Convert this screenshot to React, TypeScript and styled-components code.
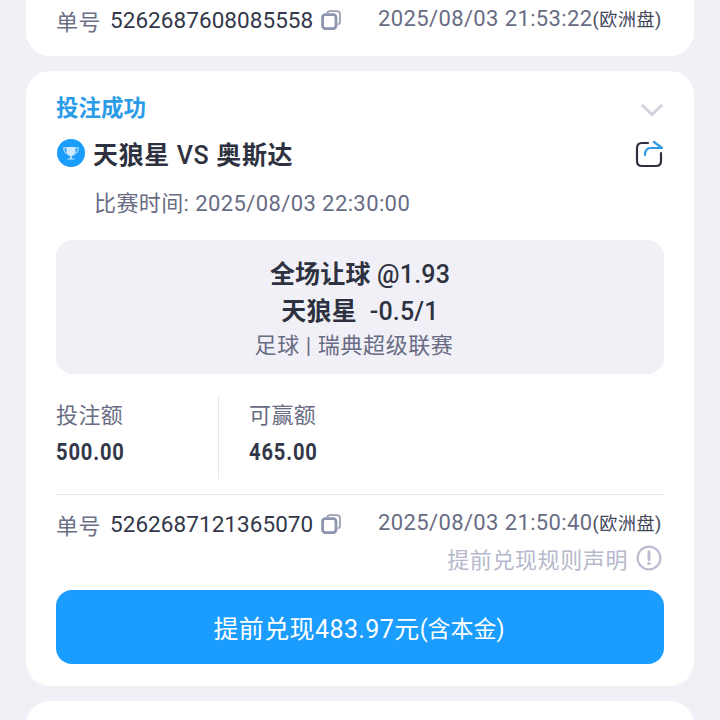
import React, { FunctionComponent } from 'react';
import styled, { createGlobalStyle } from 'styled-components';

const GlobalStyle = createGlobalStyle`
    html, body {
        margin: 0;
        padding: 0;
        background: #f0f0f6;
        font-family: Roboto, "Noto Sans CJK SC", sans-serif;
    }
`;

const CopyIcon: FunctionComponent = () => (
    <svg width="20" height="20" viewBox="0 0 20 20" fill="none">
        <path d="M6 3.6 Q6.6 1.2 9 1.2 H16 Q19 1.2 19 4.2 V12 Q19 14 17 14.6" stroke="#9a9fb8" strokeWidth="1.8" />
        <rect x="1.6" y="4.6" width="13.4" height="14" rx="2.8" stroke="#8e93ae" strokeWidth="2.8" />
    </svg>
);

const ChevronIcon: FunctionComponent = () => (
    <svg width="24" height="16" viewBox="0 0 24 16" fill="none">
        <path d="M2 3 L12 12.5 L22 3" stroke="#d0d1dc" strokeWidth="3" />
    </svg>
);

const ShareIcon: FunctionComponent = () => (
    <svg width="28" height="28" viewBox="0 0 28 28" fill="none">
        <path d="M13 3 H7 Q2 3 2 8 V21 Q2 26 7 26 H21 Q26 26 26 21 V13" stroke="#2e3240" strokeWidth="2.2" strokeLinecap="round" />
        <path d="M10 15 Q10 8 16 8 H27 L19 2" stroke="#2a9be8" strokeWidth="2.2" strokeLinecap="round" strokeLinejoin="round" />
    </svg>
);

const TrophyIcon: FunctionComponent = () => (
    <svg width="28" height="28" viewBox="0 0 28 28">
        <circle cx="14" cy="14" r="14" fill="#1a9dfb" />
        <path d="M9.5 8 H18.5 V12.5 Q18.5 17 14 17 Q9.5 17 9.5 12.5 Z" fill="#cfe9fe" />
        <path d="M9.5 9 H6.8 Q6.8 14 10.5 14.5 M18.5 9 H21.2 Q21.2 14 17.5 14.5" fill="none" stroke="#a9d9fd" strokeWidth="1.3" />
        <path d="M13.2 17 H14.8 V19.4 H17.5 V20.6 H10.5 V19.4 H13.2 Z" fill="#cfe9fe" />
    </svg>
);

const AlertIcon: FunctionComponent = () => (
    <svg width="26" height="26" viewBox="0 0 26 26" fill="none">
        <circle cx="13" cy="13" r="11.4" stroke="#babdd0" strokeWidth="2.2" />
        <path d="M13 6.8 V14.4" stroke="#babdd0" strokeWidth="3" strokeLinecap="round" />
        <circle cx="13" cy="18.6" r="1.7" fill="#babdd0" />
    </svg>
);

interface OrderProps {
    number: string;
    time: string;
}

const OrderLine: FunctionComponent<OrderProps> = ({ number, time }) => (
    <OrderRow>
        <OrderLabel>单号</OrderLabel>
        <OrderNumber>{number}</OrderNumber>
        <CopyIcon />
        <OrderTime>
            {time}
            <OddsType>(欧洲盘)</OddsType>
        </OrderTime>
    </OrderRow>
);

export default function App() {
    return (
        <Page>
            <GlobalStyle />
            <TopCard>
                <OrderLine number="5262687608085558" time="2025/08/03 21:53:22" />
            </TopCard>
            <Card>
                <StatusRow>
                    <Status>投注成功</Status>
                    <ChevronSlot>
                        <ChevronIcon />
                    </ChevronSlot>
                </StatusRow>
                <MatchRow>
                    <TrophyIcon />
                    <MatchName>
                        天狼星 <Latin>VS</Latin> 奥斯达
                    </MatchName>
                    <ShareSlot>
                        <ShareIcon />
                    </ShareSlot>
                </MatchRow>
                <MatchTime>比赛时间: 2025/08/03 22:30:00</MatchTime>
                <BetPanel>
                    <BetTitle>
                        全场让球 <Latin>@1.93</Latin>
                    </BetTitle>
                    <BetTitle>
                        天狼星&nbsp;&nbsp;<Latin>-0.5/1</Latin>
                    </BetTitle>
                    <BetLeague>足球 | 瑞典超级联赛</BetLeague>
                </BetPanel>
                <Amounts>
                    <Amount>
                        <AmountLabel>投注额</AmountLabel>
                        <AmountValue>500.00</AmountValue>
                    </Amount>
                    <Amount $divided>
                        <AmountLabel>可赢额</AmountLabel>
                        <AmountValue>465.00</AmountValue>
                    </Amount>
                </Amounts>
                <Divider />
                <OrderLine number="5262687121365070" time="2025/08/03 21:50:40" />
                <RuleRow>
                    提前兑现规则声明
                    <AlertIcon />
                </RuleRow>
                <CashOut>
                    提前兑现483.97元<CashOutNote>(含本金)</CashOutNote>
                </CashOut>
            </Card>
            <BottomCard />
        </Page>
    );
}

const Page = styled.div`
    width: 720px;
    height: 720px;
    box-sizing: border-box;
    padding: 0 26px;
    display: flex;
    flex-direction: column;
    gap: 15px;
    overflow: hidden;
    background: #f0f0f6;
`;

const Card = styled.div`
    flex: none;
    background: #fff;
    border-radius: 24px;
    padding: 21px 30px 22px;
    height: 615px;
    box-sizing: border-box;
    display: flex;
    flex-direction: column;
`;

const TopCard = styled.div`
    flex: none;
    height: 56px;
    box-sizing: border-box;
    background: #fff;
    border-radius: 0 0 24px 24px;
    padding: 5px 30px 0;
`;

const BottomCard = styled.div`
    flex: none;
    height: 60px;
    background: #fff;
    border-radius: 24px 24px 0 0;
`;

const OrderRow = styled.div`
    display: flex;
    align-items: center;
    height: 30px;
`;

const OrderLabel = styled.span`
    font-size: 22px;
    letter-spacing: 0.4px;
    color: #6b6f86;
    width: 54px;
`;

const OrderNumber = styled.span`
    font-size: 22.5px;
    letter-spacing: 0.06px;
    color: #33374a;
    margin-right: 8px;
`;

const OrderTime = styled.span`
    margin-left: auto;
    margin-right: 2px;
    font-size: 22px;
    letter-spacing: 0.38px;
    color: #686c84;
    position: relative;
    top: -2px;
`;

const OddsType = styled.span`
    font-size: 18px;
    letter-spacing: 0.6px;
    color: #43475a;
`;

const StatusRow = styled.div`
    display: flex;
    align-items: center;
    justify-content: space-between;
    height: 28px;
`;

const Status = styled.span`
    font-size: 22.5px;
    font-weight: 700;
    color: #2a9be8;
`;

const ChevronSlot = styled.span`
    display: flex;
    margin-top: 8px;
`;

const MatchRow = styled.div`
    display: flex;
    align-items: center;
    height: 34px;
    margin-top: 16px;
    padding-left: 1px;
`;

const MatchName = styled.span`
    flex: 1;
    font-size: 25px;
    font-weight: 700;
    letter-spacing: 0.65px;
    color: #2e3240;
    margin-left: 8px;
`;

const Latin = styled.span`
    font-weight: 500;
`;

const ShareSlot = styled.span`
    display: flex;
    margin: 2px 1px 0 0;
`;

const MatchTime = styled.div`
    font-size: 22px;
    letter-spacing: 0.4px;
    color: #686c84;
    margin: 19px 0 0 38px;
    height: 30px;
    line-height: 30px;
`;

const BetPanel = styled.div`
    margin-top: 21px;
    height: 134px;
    box-sizing: border-box;
    padding-top: 16px;
    background: #f0f0f6;
    border-radius: 16px;
    display: flex;
    flex-direction: column;
    align-items: center;
`;

const BetTitle = styled.div`
    font-size: 25px;
    font-weight: 700;
    letter-spacing: 0.2px;
    line-height: 37px;
    color: #2e3240;
`;

const BetLeague = styled.div`
    font-size: 22px;
    letter-spacing: 0.6px;
    line-height: 27px;
    margin-top: 2px;
    padding-right: 12px;
    color: #686c84;
`;

const Amounts = styled.div`
    display: flex;
    margin-top: 22px;
    height: 83px;
`;

const Amount = styled.div<{ $divided?: boolean }>`
    display: flex;
    flex-direction: column;
    gap: 6px;
    padding-top: 5px;
    width: ${({ $divided }) => ($divided ? 'auto' : '162px')};
    padding-left: ${({ $divided }) => ($divided ? '30px' : '0')};
    border-left: ${({ $divided }) => ($divided ? '1px solid #e6e6ec' : 'none')};
`;

const AmountLabel = styled.span`
    font-size: 22px;
    letter-spacing: 0.4px;
    line-height: 30px;
    color: #686c84;
`;

/* the numerals in the reference are a narrow DIN-like face, closest is a squeezed Roboto */
const AmountValue = styled.span`
    font-size: 24px;
    font-weight: 700;
    letter-spacing: 1px;
    line-height: 30px;
    color: #33374a;
    transform: scaleX(0.84);
    transform-origin: left center;
`;

const Divider = styled.div`
    height: 1px;
    background: #e4e4ea;
    margin: 15px 0 14px;
`;

const RuleRow = styled.div`
    display: flex;
    align-items: center;
    justify-content: flex-end;
    gap: 8px;
    height: 30px;
    margin-top: 4px;
    padding-right: 2px;
    font-size: 22px;
    letter-spacing: 0.6px;
    color: #b6b9cc;
`;

const CashOut = styled.div`
    margin-top: 17px;
    height: 74px;
    padding-right: 2px;
    background: #1a9dff;
    border-radius: 16px;
    display: flex;
    align-items: center;
    justify-content: center;
    font-size: 25px;
    letter-spacing: 0.4px;
    color: #fff;
`;

const CashOutNote = styled.span`
    font-size: 23px;
    letter-spacing: 0;
`;
